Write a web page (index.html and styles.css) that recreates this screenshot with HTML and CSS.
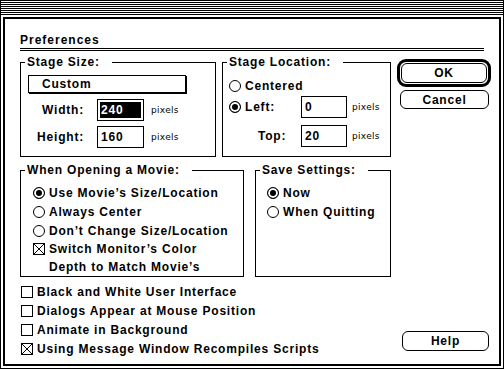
FILE: index.html
```html
<!DOCTYPE html>
<html lang="en">
<head>
  <meta charset="UTF-8">
  <title>Preferences</title>
  <link rel="stylesheet" href="styles.css">
</head>
<body>

  <div class="window">
    <div class="titlebar"></div>

    <div class="frame">
      <div class="dialog">
        <h1 class="title">Preferences</h1>
        <div class="rule"></div>

        <!-- stage size / location / buttons -->
        <div class="top-row">
          <fieldset class="group stage-size">
            <legend>Stage Size:</legend>
            <div class="popup">Custom</div>
            <div class="size-rows">
              <div class="size-row">
                <span class="lbl">Width:</span>
                <div class="field"><span class="val sel">240</span></div>
                <span class="unit">pixels</span>
              </div>
              <div class="size-row">
                <span class="lbl">Height:</span>
                <div class="field"><span class="val">160</span></div>
                <span class="unit">pixels</span>
              </div>
            </div>
          </fieldset>

          <fieldset class="group stage-loc">
            <legend>Stage Location:</legend>
            <div class="loc-body">
              <label class="opt centered"><input type="radio" name="loc"><span>Centered</span></label>
              <div class="loc-row">
                <label class="opt loc-lbl"><input type="radio" name="loc" checked><span>Left:</span></label>
                <div class="field small"><span class="val">0</span></div>
                <span class="unit">pixels</span>
              </div>
              <div class="loc-row">
                <span class="loc-lbl top-lbl">Top:</span>
                <div class="field small"><span class="val">20</span></div>
                <span class="unit">pixels</span>
              </div>
            </div>
          </fieldset>

          <div class="buttons">
            <div class="default-ring"><button class="btn ok">OK</button></div>
            <button class="btn cancel">Cancel</button>
          </div>
        </div>

        <!-- movie opening / save -->
        <div class="mid-row">
          <fieldset class="group opening">
            <legend>When Opening a Movie:</legend>
            <div class="open-body">
              <label class="opt"><input type="radio" name="open" checked><span>Use Movie’s Size/Location</span></label>
              <label class="opt"><input type="radio" name="open"><span>Always Center</span></label>
              <label class="opt"><input type="radio" name="open"><span>Don’t Change Size/Location</span></label>
              <label class="opt multi"><input type="checkbox" checked><span>Switch Monitor’s Color<br>Depth to Match Movie’s</span></label>
            </div>
          </fieldset>

          <fieldset class="group save">
            <legend>Save Settings:</legend>
            <div class="save-body">
              <label class="opt"><input type="radio" name="save" checked><span>Now</span></label>
              <label class="opt"><input type="radio" name="save"><span>When Quitting</span></label>
            </div>
          </fieldset>
        </div>

        <div class="bottom">
          <div class="checks">
            <label class="opt"><input type="checkbox"><span>Black and White User Interface</span></label>
            <label class="opt"><input type="checkbox"><span>Dialogs Appear at Mouse Position</span></label>
            <label class="opt"><input type="checkbox"><span>Animate in Background</span></label>
            <label class="opt"><input type="checkbox" checked><span>Using Message Window Recompiles Scripts</span></label>
          </div>
          <button class="btn help">Help</button>
        </div>
      </div>
    </div>
  </div>

</body>
</html>
```

FILE: styles.css
```css
* { margin: 0; padding: 0; box-sizing: border-box; }

body {
  font-family: "Liberation Sans", Arial, sans-serif;
  font-size: 12px;
  font-weight: bold;
  letter-spacing: 0.8px;
  color: #000;
  background: #fff;
}

.window {
  width: 504px;
  height: 369px;
  border: 1px solid #000;
  display: flex;
  flex-direction: column;
}

.titlebar {
  height: 16px;
  background: repeating-linear-gradient(to bottom, #fff 0 1px, #000 1px 2px) 0 0 / 100% 14px no-repeat;
}

.frame {
  flex: 1;
  margin: 0 2px 2px;
  border: 2px solid #000;
}

.dialog {
  padding: 13px 8px 0 15px;
}

.title {
  font-size: 12px;
  line-height: 16px;
  height: 16px;
  letter-spacing: 1px;
}

.rule {
  height: 3px;
  margin: 0 7px 3px 0;
  border-top: 1px solid #000;
  border-bottom: 1px solid #000;
}

/* group boxes */
.group {
  border: 1px solid #000;
  min-width: 0;
}

.group legend {
  margin-left: 4px;
  padding: 0 12px 0 2px;
  line-height: 16px;
}

.top-row { display: flex; gap: 6px; }
.mid-row { display: flex; gap: 11px; margin-top: 5px; }

.stage-size { width: 196px; }
.stage-loc  { width: 169px; }
.opening    { width: 224px; }
.save       { width: 136px; }

.popup {
  width: 158px;
  height: 18px;
  margin: 5px 0 0 7px;
  padding-left: 13px;
  border: 1px solid #000;
  box-shadow: 1px 1px 0 #000;
  line-height: 16px;
}

.size-rows { margin: 6px 0 8px 7px; }
.size-row { display: flex; align-items: center; height: 22px; }
.size-row + .size-row { margin-top: 5px; }

.lbl {
  width: 56px;
  margin-right: 13px;
  text-align: right;
}

.field {
  width: 47px;
  height: 22px;
  border: 1px solid #000;
  padding: 2px;
  line-height: 16px;
}
.field.small { width: 46px; }

.val { display: block; height: 16px; padding-left: 1px; }
.sel { background: #000; color: #fff; }

.unit {
  margin-left: 7px;
  font-family: "DejaVu Sans", sans-serif;
  font-size: 9px;
  font-weight: normal;
  letter-spacing: 0.3px;
}

.loc-body { padding: 6px 0 9px 6px; }
.centered { height: 18px; }
.loc-row { display: flex; align-items: center; height: 22px; margin-top: 7px; }
.centered + .loc-row { margin-top: 1px; }
.loc-lbl { width: 72px; flex: none; }
.top-lbl { padding-left: 29px; }
.loc-row .unit { margin-left: 5px; }

/* radios and checkboxes */
.opt {
  display: flex;
  align-items: center;
  gap: 4px;
  height: 19px;
  white-space: nowrap;
}

.opt input {
  appearance: none;
  flex: none;
  width: 12px;
  height: 12px;
  margin: 0;
  border: 1px solid #000;
  border-radius: 50%;
  background: #fff;
}

.opt input[type=radio]:checked {
  background: #000;
  box-shadow: inset 0 0 0 2px #fff;
}

.opt input[type=checkbox] { border-radius: 0; }

.opt input[type=checkbox]:checked {
  background:
    linear-gradient(to top right, transparent calc(50% - 0.6px), #000 calc(50% - 0.6px) calc(50% + 0.6px), transparent calc(50% + 0.6px)),
    linear-gradient(to bottom right, transparent calc(50% - 0.6px), #000 calc(50% - 0.6px) calc(50% + 0.6px), transparent calc(50% + 0.6px));
}

.opt.multi { align-items: flex-start; height: 36px; }
.opt.multi input { margin-top: 3px; }
.opt.multi span { line-height: 18px; }

.open-body { padding: 5px 0 0 12px; }
.save-body { padding: 5px 0 0 11px; }

/* buttons */
.buttons {
  width: 94px;
  margin-top: 5px;
  display: flex;
  flex-direction: column;
  align-items: flex-end;
}

.default-ring {
  border: 3px solid #000;
  border-radius: 9px;
  padding: 1px;
}

.btn {
  display: block;
  border: 1px solid #000;
  border-radius: 6px;
  background: #fff;
  color: #000;
  font: inherit;
  letter-spacing: inherit;
  text-align: center;
}

.ok     { width: 86px; height: 20px; }
.cancel { width: 89px; height: 19px; margin: 3px 2px 0 0; }
.help   { width: 87px; height: 20px; margin: 0 2px 7px 0; }

.bottom {
  display: flex;
  justify-content: space-between;
  align-items: flex-end;
  margin-top: 5px;
}

.checks { padding-left: 1px; }
```
